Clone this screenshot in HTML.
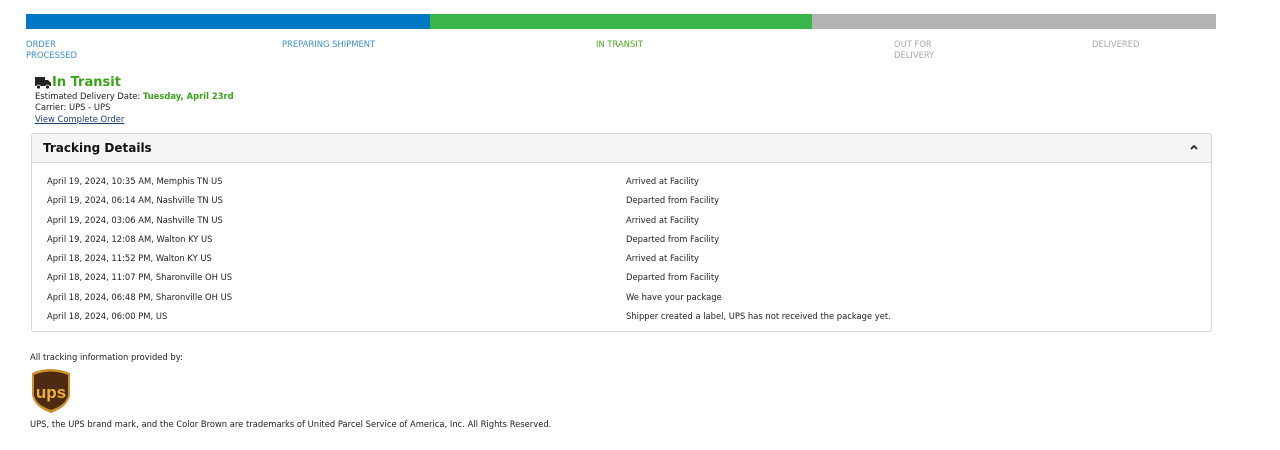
<!DOCTYPE html><html><head><style>
body{margin:0;background:#fff;font-family:"DejaVu Sans","Liberation Sans",sans-serif;font-size:8.4px;color:#222;position:relative;width:1280px;height:450px;overflow:hidden}
.a{position:absolute;white-space:nowrap}
.bar{position:absolute;top:14px;height:15px}
.lab{position:absolute;top:39px;font-size:8.4px;line-height:11px}
</style></head><body>
<div class="bar" style="left:26px;width:404px;background:#0077c5"></div>
<div class="bar" style="left:430px;width:382px;background:#39b54a"></div>
<div class="bar" style="left:812px;width:404px;background:#b3b3b3"></div>
<div class="lab" style="left:26px;color:#3d8fd0">ORDER<br>PROCESSED</div>
<div class="lab" style="left:282px;color:#3d8fd0">PREPARING SHIPMENT</div>
<div class="lab" style="left:596px;color:#4aa61e">IN TRANSIT</div>
<div class="lab" style="left:894px;color:#a9a9a9">OUT FOR<br>DELIVERY</div>
<div class="lab" style="left:1092px;color:#a9a9a9">DELIVERED</div>
<svg class="a" style="left:35px;top:77px" width="16" height="12" viewBox="0 0 16 12"><rect x="0" y="0" width="10" height="9" fill="#222"/><path d="M10 3h3l3 3v3h-6z" fill="#222"/><circle cx="3.5" cy="10" r="2" fill="#222" stroke="#fff" stroke-width="0.8"/><circle cx="12.5" cy="10" r="2" fill="#222" stroke="#fff" stroke-width="0.8"/></svg>
<div class="a" style="left:52px;top:75px;font-size:13px;font-weight:bold;color:#3aa31a">In Transit</div>
<div class="a" style="left:35px;top:91px">Estimated Delivery Date: <b style="color:#3aa31a">Tuesday, April 23rd</b></div>
<div class="a" style="left:35px;top:102px">Carrier: UPS - UPS</div>
<div class="a" style="left:35px;top:114px;color:#1a3d7a;text-decoration:underline">View Complete Order</div>
<div class="a" style="left:31px;top:133px;width:1179px;height:197px;border:1px solid #d6d6d6;border-radius:3px;overflow:hidden">
<div style="height:28px;background:#f5f5f5;border-bottom:1px solid #ddd;position:relative"><span style="position:absolute;left:11px;top:7px;font-size:12px;font-weight:bold;color:#111">Tracking Details</span><svg style="position:absolute;right:13px;top:10px" width="8" height="6" viewBox="0 0 8 6"><path d="M1 5L4 2L7 5" stroke="#222" stroke-width="1.8" fill="none"/></svg></div>
</div>
<div class="a" style="left:47px;top:172px;line-height:19.3px">April 19, 2024, 10:35 AM, Memphis TN US<br>April 19, 2024, 06:14 AM, Nashville TN US<br>April 19, 2024, 03:06 AM, Nashville TN US<br>April 19, 2024, 12:08 AM, Walton KY US<br>April 18, 2024, 11:52 PM, Walton KY US<br>April 18, 2024, 11:07 PM, Sharonville OH US<br>April 18, 2024, 06:48 PM, Sharonville OH US<br>April 18, 2024, 06:00 PM, US</div>
<div class="a" style="left:626px;top:172px;line-height:19.3px">Arrived at Facility<br>Departed from Facility<br>Arrived at Facility<br>Departed from Facility<br>Arrived at Facility<br>Departed from Facility<br>We have your package<br>Shipper created a label, UPS has not received the package yet.</div>
<div class="a" style="left:30px;top:352px">All tracking information provided by:</div>
<svg class="a" style="left:30px;top:367px" width="42" height="48" viewBox="0 0 42 48"><path d="M2 6Q20 -2 40 6V28Q38 40 21 46Q4 40 2 28Z" fill="#c9922f"/><path d="M4 8Q20 1 38 8V28Q36 38 21 43Q6 38 4 28Z" fill="#4e2a12"/><text x="21" y="31" font-family="Liberation Sans,sans-serif" font-size="17" font-weight="bold" fill="#f0b43c" text-anchor="middle">ups</text></svg>
<div class="a" style="left:30px;top:419px">UPS, the UPS brand mark, and the Color Brown are trademarks of United Parcel Service of America, Inc. All Rights Reserved.</div>
</body></html>
